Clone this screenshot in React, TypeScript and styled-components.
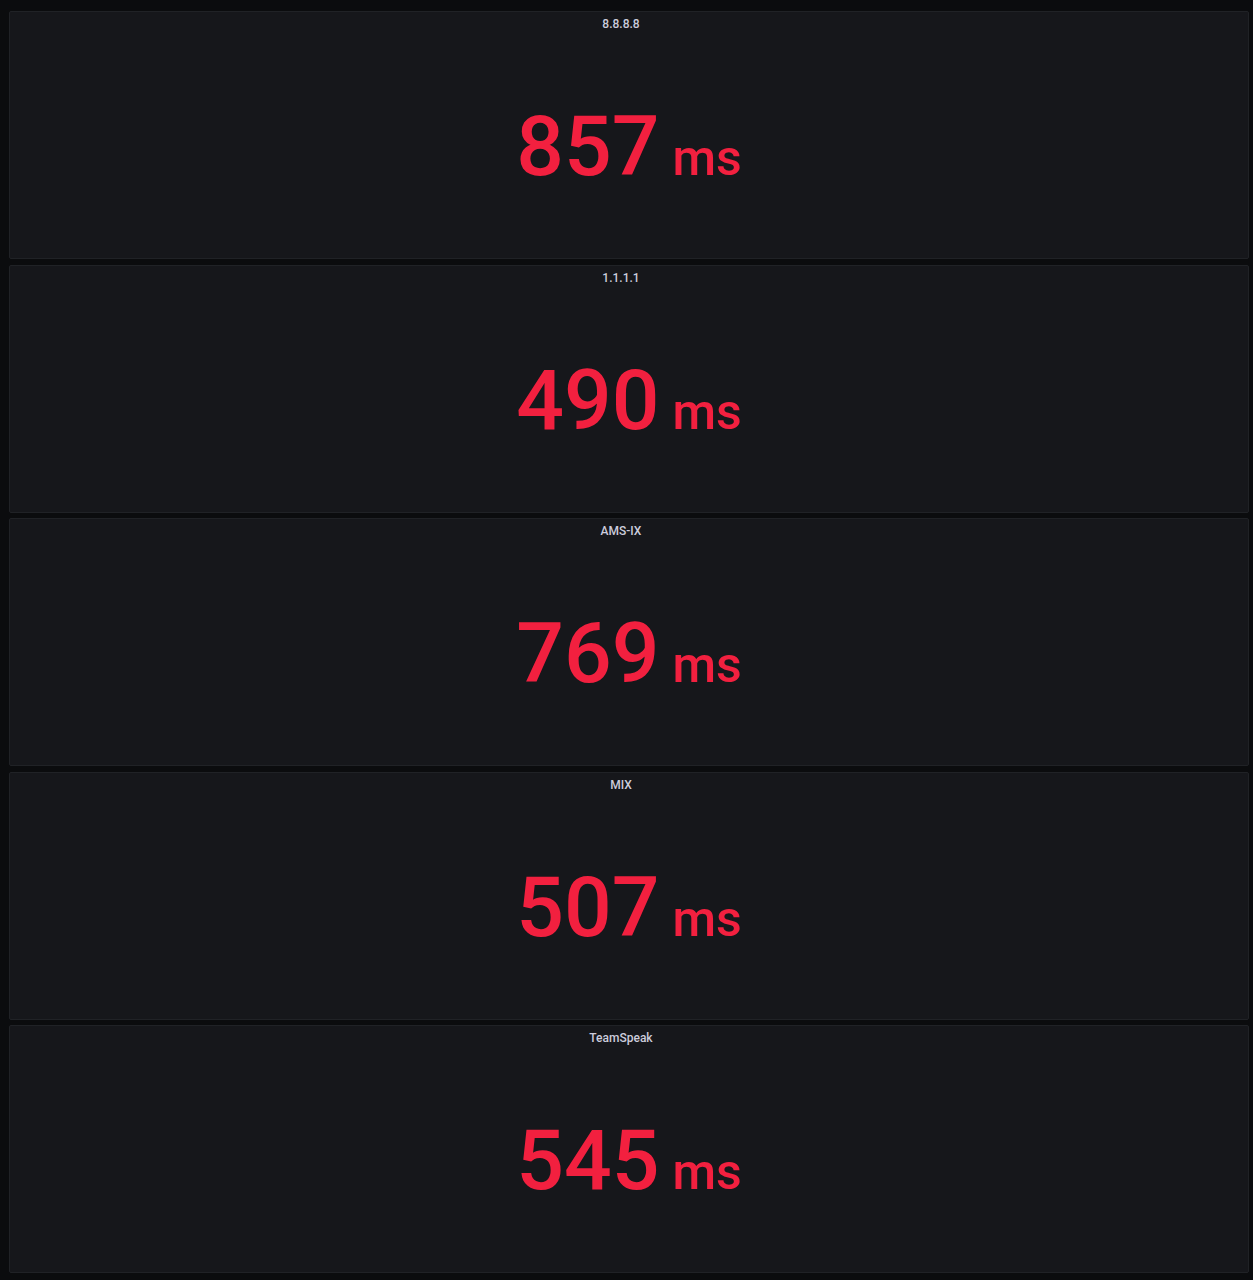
import React from 'react'
import styled, { createGlobalStyle } from 'styled-components'

const GlobalStyle = createGlobalStyle`
  html, body {
    margin: 0;
    padding: 0;
    background: #0b0c0e;
  }
  body {
    font-family: Roboto, "Liberation Sans", sans-serif;
  }
`

interface Stat {
  title: string
  value: number
  unit: string
}

const stats: Stat[] = [
  { title: '8.8.8.8', value: 857, unit: 'ms' },
  { title: '1.1.1.1', value: 490, unit: 'ms' },
  { title: 'AMS-IX', value: 769, unit: 'ms' },
  { title: 'MIX', value: 507, unit: 'ms' },
  { title: 'TeamSpeak', value: 545, unit: 'ms' },
]

function StatPanel({ title, value, unit }: Stat) {
  return (
    <Panel>
      <Header>{title}</Header>
      <Body>
        <Value>
          {value}
          <Unit>{unit}</Unit>
        </Value>
      </Body>
    </Panel>
  )
}

export default function App() {
  return (
    <>
      <GlobalStyle />
      <Dashboard>
        {stats.map((s) => (
          <StatPanel key={s.title} {...s} />
        ))}
      </Dashboard>
    </>
  )
}

const Dashboard = styled.div`
  display: flex;
  flex-direction: column;
  gap: 5.5px;
  padding: 11px 4px 7px 9px;
  width: 1253px;
  box-sizing: border-box;
`

const Panel = styled.div`
  height: 248px;
  box-sizing: border-box;
  background: #16171b;
  border: 1px solid #202226;
  border-radius: 2px;
  display: flex;
  flex-direction: column;
`

const Header = styled.div`
  height: 24px;
  padding-right: 16px;
  display: flex;
  align-items: center;
  justify-content: center;
  font-size: 12px;
  font-weight: 500;
  color: #ccccdc;
`

const Body = styled.div`
  flex: 1;
  display: flex;
  align-items: center;
  justify-content: center;
  padding-left: 0;
`

const Value = styled.div`
  display: flex;
  align-items: baseline;
  font-size: 84px;
  font-weight: 500;
  line-height: 1;
  color: #f2203f;
`

const Unit = styled.span`
  font-size: 50px;
  margin-left: 13px;
`
